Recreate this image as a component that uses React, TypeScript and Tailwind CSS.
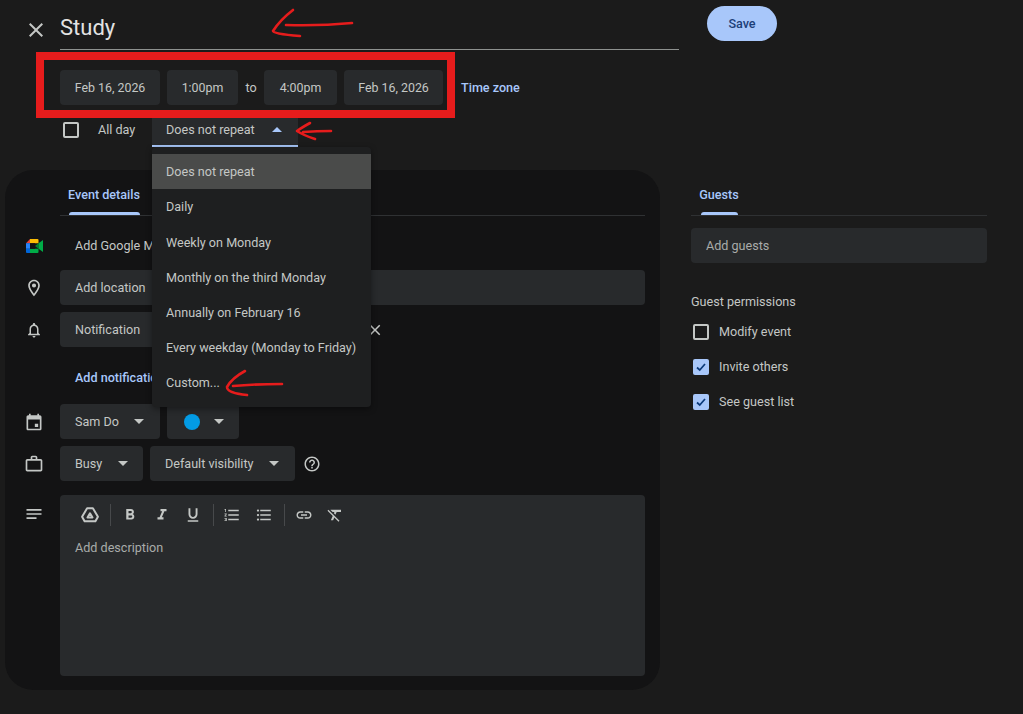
import React from "react";

const P = ({ d, c = "", s = 20 }: { d: string; c?: string; s?: number }) => (
  <svg width={s} height={s} viewBox="0 0 24 24" fill="currentColor" className={c}>
    <path d={d} />
  </svg>
);

const Caret = ({ c = "text-[#c4c7c5]" }: { c?: string }) => (
  <svg width="10" height="5" viewBox="0 0 10 5" className={c} fill="currentColor">
    <path d="M0 0h10L5 5z" />
  </svg>
);

const Chip = ({ children, w }: { children: React.ReactNode; w: string }) => (
  <div className={`flex h-[35px] items-center justify-center rounded-[4px] bg-[#282a2c] pt-[2px] text-[12.4px] text-[#c4c7c5] ${w}`}>
    {children}
  </div>
);

const Select = ({ label, w, gap }: { label: React.ReactNode; w: string; gap: string }) => (
  <div className={`flex h-[35px] items-center rounded-[4px] bg-[#282a2c] pl-[15px] text-[12.6px] text-[#c4c7c5] ${w}`}>
    <span className="mt-[2px]">{label}</span>
    <span className={`flex ${gap}`}>
      <Caret />
    </span>
  </div>
);

const ICONS = {
  close: "M19 6.41L17.59 5 12 10.59 6.41 5 5 6.41 10.59 12 5 17.59 6.41 19 12 13.41 17.59 19 19 17.59 13.41 12z",
  place: "M12 2C8.13 2 5 5.13 5 9c0 5.25 7 13 7 13s7-7.75 7-13c0-3.87-3.13-7-7-7zM7 9c0-2.76 2.24-5 5-5s5 2.24 5 5c0 2.88-2.88 7.19-5 9.88C9.92 16.21 7 11.85 7 9zm5-2.5a2.5 2.5 0 1 0 0 5 2.5 2.5 0 0 0 0-5z",
  bell: "M12 22c1.1 0 2-.9 2-2h-4c0 1.1.9 2 2 2zm6-6v-5c0-3.07-1.63-5.64-4.5-6.32V4c0-.83-.67-1.5-1.5-1.5s-1.5.67-1.5 1.5v.68C7.64 5.36 6 7.92 6 11v5l-2 2v1h16v-1l-2-2zm-2 1H8v-6c0-2.48 1.51-4.5 4-4.5s4 2.02 4 4.5v6z",
  cal: "M19 4h-1V2h-2v2H8V2H6v2H5c-1.1 0-2 .9-2 2v14c0 1.1.9 2 2 2h14c1.1 0 2-.9 2-2V6c0-1.1-.9-2-2-2zm0 16H5V9h14v11zm-6-6h4v4h-4z",
  work: "M20 6h-4V4c0-1.11-.89-2-2-2h-4c-1.11 0-2 .89-2 2v2H4c-1.11 0-1.99.89-1.99 2L2 19c0 1.11.89 2 2 2h16c1.11 0 2-.89 2-2V8c0-1.11-.89-2-2-2zm-6 0h-4V4h4v2zm6 13H4V8h16v11z",
  notes: "M3 18h12v-2H3v2zM3 6v2h18V6H3zm0 7h18v-2H3v2z",
  help: "M11 18h2v-2h-2v2zm1-16C6.48 2 2 6.48 2 12s4.48 10 10 10 10-4.48 10-10S17.52 2 12 2zm0 18c-4.41 0-8-3.59-8-8s3.59-8 8-8 8 3.59 8 8-3.59 8-8 8zm0-14c-2.21 0-4 1.79-4 4h2c0-1.1.9-2 2-2s2 .9 2 2c0 2-3 1.75-3 5h2c0-2.25 3-2.5 3-5 0-2.21-1.79-4-4-4z",
  bold: "M15.6 10.79c.97-.67 1.65-1.77 1.65-2.79 0-2.26-1.75-4-4-4H7v14h7.04c2.09 0 3.71-1.7 3.71-3.79 0-1.52-.86-2.82-2.15-3.42zM10 6.5h3c.83 0 1.5.67 1.5 1.5s-.67 1.5-1.5 1.5h-3v-3zm3.5 9H10v-3h3.5c.83 0 1.5.67 1.5 1.5s-.67 1.5-1.5 1.5z",
  italic: "M10 4v3h2.21l-3.42 8H6v3h8v-3h-2.21l3.42-8H18V4z",
  underline: "M12 17c3.31 0 6-2.69 6-6V3h-2.5v8c0 1.93-1.57 3.5-3.5 3.5S8.5 12.93 8.5 11V3H6v8c0 3.31 2.69 6 6 6zm-7 2v2h14v-2H5z",
  ol: "M2 17h2v.5H3v1h1v.5H2v1h3v-4H2v1zm1-9h1V4H2v1h1v3zm-1 3h1.8L2 13.1v.9h3v-1H3.2L5 10.9V10H2v1zm5-6v2h14V5H7zm0 14h14v-2H7v2zm0-6h14v-2H7v2z",
  ul: "M4 10.5c-.83 0-1.5.67-1.5 1.5s.67 1.5 1.5 1.5 1.5-.67 1.5-1.5-.67-1.5-1.5-1.5zm0-6c-.83 0-1.5.67-1.5 1.5S3.17 7.5 4 7.5 5.5 6.83 5.5 6 4.83 4.5 4 4.5zm0 12c-.83 0-1.5.68-1.5 1.5s.68 1.5 1.5 1.5 1.5-.68 1.5-1.5-.67-1.5-1.5-1.5zM7 19h14v-2H7v2zm0-6h14v-2H7v2zm0-8v2h14V5H7z",
  link: "M3.9 12c0-1.71 1.39-3.1 3.1-3.1h4V7H7c-2.76 0-5 2.24-5 5s2.24 5 5 5h4v-1.9H7c-1.71 0-3.1-1.39-3.1-3.1zM8 13h8v-2H8v2zm9-6h-4v1.9h4c1.71 0 3.1 1.39 3.1 3.1s-1.39 3.1-3.1 3.1h-4V17h4c2.76 0 5-2.24 5-5s-2.24-5-5-5z",
  clear: "M3.27 5L2 6.27l6.97 6.97L6.5 19h3l1.57-3.66L16.73 21 18 19.73 3.55 5.27 3.27 5zM6 5v.18L8.82 8h2.4l-.72 1.68 2.1 2.1L14.21 8H20V5H6z",
};

const Row = ({ icon, children, h = "h-[35px]", mt = "mt-[7px]" }: { icon?: React.ReactNode; children: React.ReactNode; h?: string; mt?: string }) => (
  <div className={`flex ${h} ${mt} items-center`}>
    <div className="flex w-[24px] justify-center text-[#c4c7c5]">{icon}</div>
    <div className="ml-[14px] flex flex-1 items-center">{children}</div>
  </div>
);

const Meet = () => (
  <svg width="17" height="14" viewBox="0 0 17 14">
    <path d="M4 0h7.5a1 1 0 0 1 1 1v3.2H4z" fill="#fbbc04" />
    <path d="M4 0v4.2H0z" fill="#ea4335" />
    <path d="M0 4.2h4v5.6H0z" fill="#2684fc" />
    <path d="M0 9.8h4V14H1a1 1 0 0 1-1-1z" fill="#0066da" />
    <path d="M4 9.8h8.5V13a1 1 0 0 1-1 1H4z" fill="#00ac47" />
    <path d="M9 7l3.5-2.8v5.6z" fill="#00832d" />
    <path d="M12.5 4.2L17 1v12l-4.5-3.2z" fill="#00ac47" />
    <path d="M4 4.2h5V9.8H4z" fill="#131314" />
  </svg>
);

const Check = ({ on, label }: { on: boolean; label: string }) => (
  <div className="flex h-[35px] items-center">
    {on ? (
      <div className="ml-[2px] flex h-[16px] w-[16px] items-center justify-center rounded-[2px] bg-[#a8c7fa]">
        <svg width="12" height="12" viewBox="0 0 24 24" fill="none" stroke="#0b3a7a" strokeWidth="3.4">
          <path d="M4 13l5.5 5L20 6" />
        </svg>
      </div>
    ) : (
      <div className="ml-[2px] h-[16px] w-[16px] rounded-[2px] border-2 border-[#c4c7c5]" />
    )}
    <span className="ml-[10px] mt-[2px] text-[12.6px] text-[#c4c7c5]">{label}</span>
  </div>
);

const Sep = ({ m }: { m: string }) => <div className={`h-[22px] w-px bg-[#47494b] ${m}`} />;

const menu = [
  "Does not repeat",
  "Daily",
  "Weekly on Monday",
  "Monthly on the third Monday",
  "Annually on February 16",
  "Every weekday (Monday to Friday)",
  "Custom...",
];

const Red = ({ d, c, w, h }: { d: string; c: string; w: number; h: number }) => (
  <svg className={`pointer-events-none absolute ${c}`} width={w} height={h} viewBox={`0 0 ${w} ${h}`} fill="none" stroke="#e61c1c" strokeWidth="2.6" strokeLinecap="round" strokeLinejoin="round">
    <path d={d} />
  </svg>
);

export default function App() {
  return (
    <div className="relative h-[714px] w-[1023px] overflow-hidden bg-[#1b1b1b] font-['Roboto',sans-serif] text-[#c4c7c5]">
      <header className="flex h-[50px] pl-[24px]">
        <div className="flex w-[24px] items-end pb-[8px] text-[#c4c7c5]">
          <P d={ICONS.close} s={24} />
        </div>
        <div className="ml-[12px] flex h-[50px] w-[619px] items-center border-b border-[#8e918f] pt-[6px] text-[22px] text-[#e3e3e3]">Study</div>
        <button className="ml-[28px] mt-[6px] h-[35px] w-[70px] rounded-full bg-[#a8c7fa] pt-[1px] text-[12.6px] font-medium text-[#1c3f78]">Save</button>
      </header>

      <div className="ml-[60px] mt-[20px] flex h-[35px] items-center">
        <Chip w="w-[100px]">Feb 16, 2026</Chip>
        <Chip w="ml-[7px] w-[71px]">1:00pm</Chip>
        <span className="flex w-[26px] justify-center pt-[2px] text-[12.6px]">to</span>
        <Chip w="w-[73px]">4:00pm</Chip>
        <Chip w="ml-[7px] w-[99px]">Feb 16, 2026</Chip>
        <span className="ml-[18px] mt-[2px] text-[12.6px] font-medium text-[#a8c7fa]">Time zone</span>
      </div>

      <div className="ml-[63px] mt-[7px] flex h-[35px] items-center">
        <div className="h-[16px] w-[16px] rounded-[2px] border-2 border-[#c4c7c5]" />
        <span className="ml-[19px] mt-[2px] w-[36px] text-[12.6px] whitespace-nowrap">All day</span>
        <div className="ml-[18px] flex h-[35px] w-[146px] items-center rounded-t-[4px] border-b-2 border-[#a8c7fa] bg-[#282a2c] pl-[14px] text-[12.6px]">
          <span className="mt-[4px]">Does not repeat</span>
          <span className="ml-[17px] mt-[2px] flex">
            <Caret c="rotate-180 text-[#a8c7fa]" />
          </span>
        </div>
      </div>

      <div className="mt-[23px] flex">
        <main className="ml-[5px] h-[520px] w-[655px] rounded-[28px] bg-[#131314] pl-[17px] pr-[15px]">
          <div className="ml-[38px] h-[46px] border-b border-[#2f3133]">
            <div className="flex h-[45px] w-[88px] flex-col items-center justify-end">
              <span className="mb-[7px] text-[12.6px] font-medium text-[#a8c7fa]">Event details</span>
              <div className="h-[3px] w-[71px] rounded-t-[3px] bg-[#a8c7fa]" />
            </div>
          </div>

          <Row icon={<Meet />} mt="mt-[12px]">
            <span className="mt-[2px] pl-[15px] text-[12.6px] whitespace-nowrap">Add Google M</span>
          </Row>
          <Row icon={<P d={ICONS.place} />}>
            <div className="flex h-[35px] w-full items-center rounded-[4px] bg-[#282a2c] pl-[15px] pt-[2px] text-[12.6px]">Add location</div>
          </Row>
          <Row icon={<P d={ICONS.bell} s={18} />}>
            <div className="flex h-[35px] w-[300px] items-center rounded-[4px] bg-[#282a2c] pl-[15px] pt-[2px] text-[12.6px] text-[#c4c7c5]">Notification</div>
            <span className="ml-[6px] flex text-[#c4c7c5]">
              <P d={ICONS.close} s={18} />
            </span>
          </Row>
          <Row mt="mt-[12px]">
            <span className="mt-[4px] pl-[15px] text-[12.6px] font-medium text-[#a8c7fa]">Add notification</span>
          </Row>
          <Row icon={<P d={ICONS.cal} />} mt="mt-[10px]">
            <Select label="Sam Do" w="w-[100px]" gap="ml-[15px]" />
            <div className="ml-[7px] flex h-[35px] w-[72px] items-center rounded-[4px] bg-[#282a2c] pl-[17px]">
              <div className="h-[16px] w-[16px] rounded-full bg-[#039be5]" />
              <span className="ml-[14px] flex">
                <Caret />
              </span>
            </div>
          </Row>
          <Row icon={<P d={ICONS.work} />}>
            <Select label="Busy" w="w-[83px]" gap="ml-[16px]" />
            <div className="ml-[7px]">
              <Select label="Default visibility" w="w-[145px]" gap="ml-[16px]" />
            </div>
            <span className="ml-[8px] flex text-[#c4c7c5]">
              <P d={ICONS.help} s={18} />
            </span>
          </Row>

          <div className="mt-[14px] flex">
            <div className="flex w-[24px] justify-center pt-[9px] text-[#c4c7c5]">
              <P d={ICONS.notes} />
            </div>
            <div className="ml-[14px] h-[181px] flex-1 rounded-[4px] bg-[#282a2c] pl-[15px]">
              <div className="flex h-[40px] items-center text-[#c4c7c5]">
                <svg width="20" height="20" viewBox="0 0 24 24" fill="none" stroke="currentColor" strokeWidth="2.4" strokeLinejoin="round" className="ml-[5px]">
                  <path d="M8.5 4h7l6 10-3 5.5H5.5L2.5 14z" />
                  <path d="M12 10l3 5H9z" />
                </svg>
                <Sep m="ml-[10px]" />
                <P d={ICONS.bold} s={18} c="ml-[10px]" />
                <P d={ICONS.italic} s={18} c="ml-[14px]" />
                <P d={ICONS.underline} s={18} c="ml-[13px]" />
                <Sep m="ml-[11px]" />
                <P d={ICONS.ol} s={18} c="ml-[9px]" />
                <P d={ICONS.ul} s={18} c="ml-[14px]" />
                <Sep m="ml-[11px]" />
                <P d={ICONS.link} s={18} c="ml-[10px]" />
                <P d={ICONS.clear} s={18} c="ml-[13px]" />
              </div>
              <div className="mt-[4px] text-[12.6px] text-[#a9acaa]">Add description</div>
            </div>
          </div>
        </main>

        <aside className="ml-[31px] w-[296px]">
          <div className="h-[46px] border-b border-[#2f3133]">
            <div className="ml-[5px] flex h-[45px] w-[46px] flex-col items-center justify-end">
              <span className="mb-[7px] text-[12.6px] font-medium text-[#a8c7fa]">Guests</span>
              <div className="h-[3px] w-[37px] rounded-t-[3px] bg-[#a8c7fa]" />
            </div>
          </div>
          <div className="mt-[12px] flex h-[35px] items-center rounded-[4px] bg-[#282a2c] pl-[15px] pt-[2px] text-[12.6px] text-[#a9acaa]">Add guests</div>
          <div className="mt-[31px] text-[12.6px] leading-[15px] text-[#c4c7c5]">Guest permissions</div>
          <div className="mt-[5px] flex flex-col">
            <Check on={false} label="Modify event" />
            <Check on label="Invite others" />
            <Check on label="See guest list" />
          </div>
        </aside>
      </div>

      <div className="absolute left-[152px] top-[147px] w-[219px] rounded-[4px] bg-[#1e1f20] py-[7px] shadow-[0_2px_6px_rgba(0,0,0,0.4)]">
        {menu.map((m, i) => (
          <div key={m} className={`flex h-[35.2px] items-center pl-[14px] pt-[2px] text-[12.6px] text-[#c4c7c5] ${i === 0 ? "bg-[#4a4b4a]" : ""}`}>
            {m}
          </div>
        ))}
      </div>

      <div className="pointer-events-none absolute left-[36px] top-[52px] h-[66px] w-[419px] border-[8px] border-[#e61c1c]" />
      <Red c="left-[270px] top-[8px]" w={84} h={32} d="M23 2 Q10 12 3 23 Q3 26 30 28 M16 17 Q50 18 82 15" />
      <Red c="left-[295px] top-[121px]" w={38} h={20} d="M15 2 Q6 7 2 10 Q8 14 20 18 M8 11 Q22 10 36 10" />
      <Red c="left-[224px] top-[369px]" w={60} h={28} d="M21 2 Q8 9 3 18 Q3 24 23 26 M9 17 Q30 15 58 15" />
    </div>
  );
}
